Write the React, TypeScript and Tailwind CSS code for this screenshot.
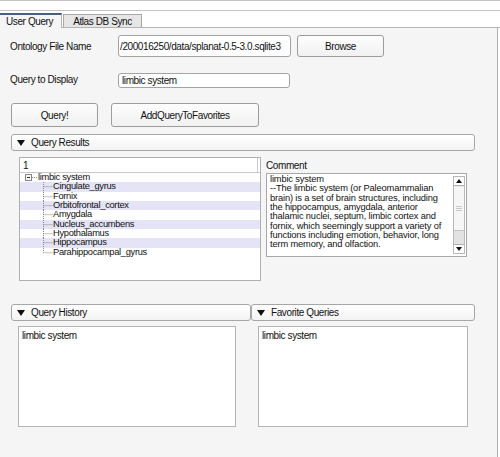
import React from "react";

const font = "font-['Liberation_Sans',Arial,sans-serif]";
const txt = "text-[10px] tracking-[-0.4px] text-[#111]";

function Tri() {
  return (
    <svg width="8" height="6" viewBox="0 0 8 6" className="shrink-0">
      <polygon points="0,0 8,0 4,6" fill="#111" />
    </svg>
  );
}

function Header({ label, className }: { label: string; className: string }) {
  return (
    <div
      className={`flex items-center gap-[6px] pl-[5px] rounded-[3px] border border-[#a6a6a6] bg-gradient-to-b from-white to-[#f3f3f3] ${className}`}
    >
      <Tri />
      <span className={txt}>{label}</span>
    </div>
  );
}

function Btn({ label, className }: { label: string; className: string }) {
  return (
    <div
      className={`flex items-center justify-center rounded-[3px] border border-[#9c9c9c] bg-gradient-to-b from-[#fdfdfd] to-[#f1f1f1] ${txt} ${className}`}
    >
      {label}
    </div>
  );
}

const children = [
  "Cingulate_gyrus",
  "Fornix",
  "Orbitofrontal_cortex",
  "Amygdala",
  "Nucleus_accumbens",
  "Hypothalamus",
  "Hippocampus",
  "Parahippocampal_gyrus",
];

const comment = [
  "limbic system",
  "--The limbic system (or Paleomammalian",
  "brain) is a set of brain structures, including",
  "the hippocampus, amygdala, anterior",
  "thalamic nuclei, septum, limbic cortex and",
  "fornix, which seemingly support a variety of",
  "functions including emotion, behavior, long",
  "term memory, and olfaction.",
];

function Connector({ last }: { last: boolean }) {
  return (
    <svg width="10" height="9.33" viewBox="0 0 10 9.33" className="shrink-0">
      <line x1="0.5" y1="0" x2="0.5" y2={last ? 4.7 : 9.33} stroke="#888" strokeWidth="1" strokeDasharray="1 1" />
      <line x1="0.5" y1="4.7" x2="10" y2="4.7" stroke="#888" strokeWidth="1" strokeDasharray="1 1" />
    </svg>
  );
}

export default function App() {
  return (
    <div className={`w-[500px] h-[457px] flex flex-col bg-white overflow-hidden ${font}`}>
      {/* top strip */}
      <div className="h-[11px] shrink-0 border-t border-b border-[#c4c4c4] bg-white" />
      <div className="h-[17px] shrink-0 flex items-end border-b border-[#b4b4b4]">
        <div className={`w-[62px] h-[15px] -mb-px bg-[#f5f5f5] border-t-2 border-[#4a5f80] border-r border-r-[#b4b4b4] flex items-center pl-[6px] ${txt}`}>
          User Query
        </div>
        <div className={`ml-[1px] w-[79px] h-[13px] bg-[#e6e6e6] border border-b-0 border-[#a8a8a8] flex items-center justify-center ${txt}`}>
          Atlas DB Sync
        </div>
      </div>

      {/* content */}
      <div className="flex-1 w-[498px] bg-[#f5f5f5] border-r border-[#b0b0b0] flex flex-col">
        {/* row 1 */}
        <div className="flex items-center mt-[7px] h-[22px]">
          <div className={`w-[108px] ml-[10px] ${txt}`}>Ontology File Name</div>
          <div className={`w-[173px] h-[22px] bg-white border border-[#a3a3a3] rounded-[3px] flex items-center pl-[1px] overflow-hidden whitespace-nowrap ${txt}`}>
            /200016250/data/splanat-0.5-3.0.sqlite3
          </div>
          <Btn label="Browse" className="ml-[6px] w-[87px] h-[22px]" />
        </div>
        {/* row 2 */}
        <div className="flex items-center mt-[16px] h-[15px]">
          <div className={`w-[108px] ml-[10px] -mt-[3px] ${txt}`}>Query to Display</div>
          <div className={`w-[172px] h-[15px] bg-white border border-[#a3a3a3] rounded-[3px] flex items-center pl-[3px] ${txt}`}>
            limbic system
          </div>
        </div>
        {/* buttons */}
        <div className="flex mt-[15px] h-[24px]">
          <Btn label="Query!" className="ml-[11px] w-[87px] h-[24px]" />
          <Btn label="AddQueryToFavorites" className="ml-[13px] w-[148px] h-[24px]" />
        </div>
        {/* Query Results */}
        <Header label="Query Results" className="ml-[11px] mt-[7px] w-[464px] h-[17px]" />

        <div className="flex mt-[6px]">
          {/* tree */}
          <div className="ml-[19px] w-[242px] h-[124px] bg-white border border-[#b0b0b0] flex flex-col">
            <div className="h-[15px] flex border-b border-[#c8c8c8] bg-white">
              <div className={`flex-1 flex items-center pl-[3px] ${txt}`}>1</div>
              <div className="w-[3px] border-l border-[#c8c8c8]" />
            </div>
            <div className="flex flex-col text-[9.3px] tracking-[-0.3px] text-[#111] leading-[9.33px]">
              <div className="h-[9.33px] flex items-center">
                <div className="ml-[5px] w-[7px] h-[7px] border border-[#888] bg-[#f4f4f4] flex items-center justify-center">
                  <div className="w-[3px] h-px bg-[#333]" />
                </div>
                <div className="w-[5px] border-t border-dotted border-[#888]" />
                <span className="ml-px">limbic system</span>
              </div>
              {children.map((c, i) => (
                <div
                  key={c}
                  className={`h-[9.33px] flex items-center ${i % 2 === 0 ? "bg-[#e4e4f6]" : ""}`}
                >
                  <div className="w-[23px] shrink-0" />
                  <Connector last={i === children.length - 1} />
                  <span className="whitespace-nowrap">{c}</span>
                </div>
              ))}
            </div>
          </div>

          {/* comment */}
          <div className="ml-[5px] flex flex-col">
            <div className={`h-[16px] flex items-center ${txt}`}>Comment</div>
            <div className="w-[201px] h-[84px] bg-white border border-[#a8a8a8] flex">
              <div className="flex-1 pl-[3px] pt-[1px] text-[9.3px] tracking-[-0.15px] text-[#111] leading-[9.33px] whitespace-pre">
                {comment.map((l) => (
                  <div key={l}>{l}</div>
                ))}
              </div>
              <div className="w-[12px] mr-px my-[2px] flex flex-col border border-[#b8b8b8] bg-[#e9e9e9]">
                <div className="h-[9px] flex items-center justify-center bg-white border-b border-[#b0b0b0]">
                  <svg width="6" height="4" viewBox="0 0 6 4"><polygon points="0,4 6,4 3,0" fill="#111" /></svg>
                </div>
                <div className="h-[44px] mt-px bg-[#f6f6f6] border-b border-[#c4c4c4] flex flex-col items-center justify-center gap-[1px]">
                  <div className="w-[6px] h-px bg-[#c8c8c8]" />
                  <div className="w-[6px] h-px bg-[#c8c8c8]" />
                  <div className="w-[6px] h-px bg-[#c8c8c8]" />
                </div>
                <div className="flex-1 bg-[#e2e2e2]" />
                <div className="h-[9px] flex items-center justify-center bg-white border-t border-[#b0b0b0]">
                  <svg width="6" height="4" viewBox="0 0 6 4"><polygon points="0,0 6,0 3,4" fill="#111" /></svg>
                </div>
              </div>
            </div>
          </div>
        </div>

        {/* history / favorites headers */}
        <div className="flex mt-[23px]">
          <Header label="Query History" className="ml-[11px] w-[240px] h-[17px]" />
          <Header label="Favorite Queries" className="w-[224px] h-[17px]" />
        </div>
        <div className="flex mt-[5px]">
          <div className={`ml-[18px] w-[218px] h-[101px] bg-white border border-[#b4b4b4] pl-[3px] pt-[1px] ${txt}`}>
            limbic system
          </div>
          <div className={`ml-[22px] w-[210px] h-[101px] bg-white border border-[#b4b4b4] pl-[3px] pt-[1px] ${txt}`}>
            limbic system
          </div>
        </div>
      </div>
    </div>
  );
}
